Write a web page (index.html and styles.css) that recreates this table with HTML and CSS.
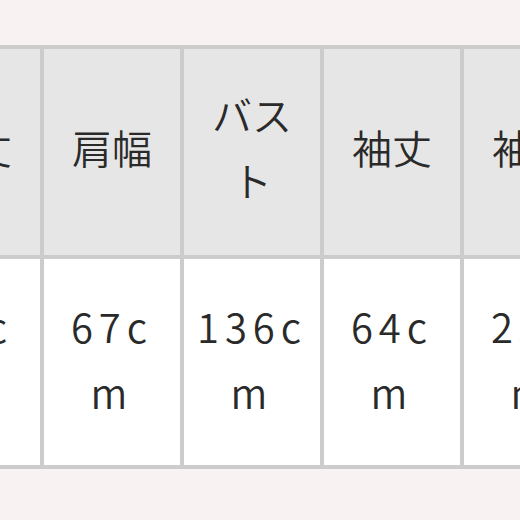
FILE: index.html
```html
<!DOCTYPE html>
<html lang="ja">
<head>
<meta charset="utf-8">
<link rel="stylesheet" href="styles.css">
</head>
<body>
<div class="frame">
  <div class="grid">
    <div class="cell head">着丈</div>
    <div class="cell head">肩幅</div>
    <div class="cell head">バスト</div>
    <div class="cell head">袖丈</div>
    <div class="cell head">袖幅</div>
    <div class="cell val">77cm</div>
    <div class="cell val">67cm</div>
    <div class="cell val">136cm</div>
    <div class="cell val">64cm</div>
    <div class="cell val">23cm</div>
  </div>
</div>
</body>
</html>
```

FILE: styles.css
```css
html, body {
  margin: 0;
  padding: 0;
  background: #f9f2f3;
}
body {
  width: 520px;
  height: 520px;
  overflow: hidden;
  font-family: "Noto Sans CJK JP", "Noto Sans", sans-serif;
  color: #2a2a2a;
}
.frame {
  width: 520px;
  overflow: hidden;
  padding-top: 45px;
}
.grid {
  display: grid;
  grid-template-columns: repeat(5, 136px);
  grid-auto-rows: 206px;
  gap: 4px;
  padding: 4px;
  background: #cccccc;
  width: max-content;
  margin-left: -100px;
}
.cell {
  display: flex;
  align-items: center;
  justify-content: center;
  text-align: center;
  padding: 0 10px;
  font-size: 40px;
  font-weight: 350;
  line-height: 66px;
  word-break: break-all;
}
.head {
  background: #e6e6e6;
  padding-bottom: 10px;
}
.val {
  background: #ffffff;
  letter-spacing: 6px;
  padding-bottom: 6px;
}
```
